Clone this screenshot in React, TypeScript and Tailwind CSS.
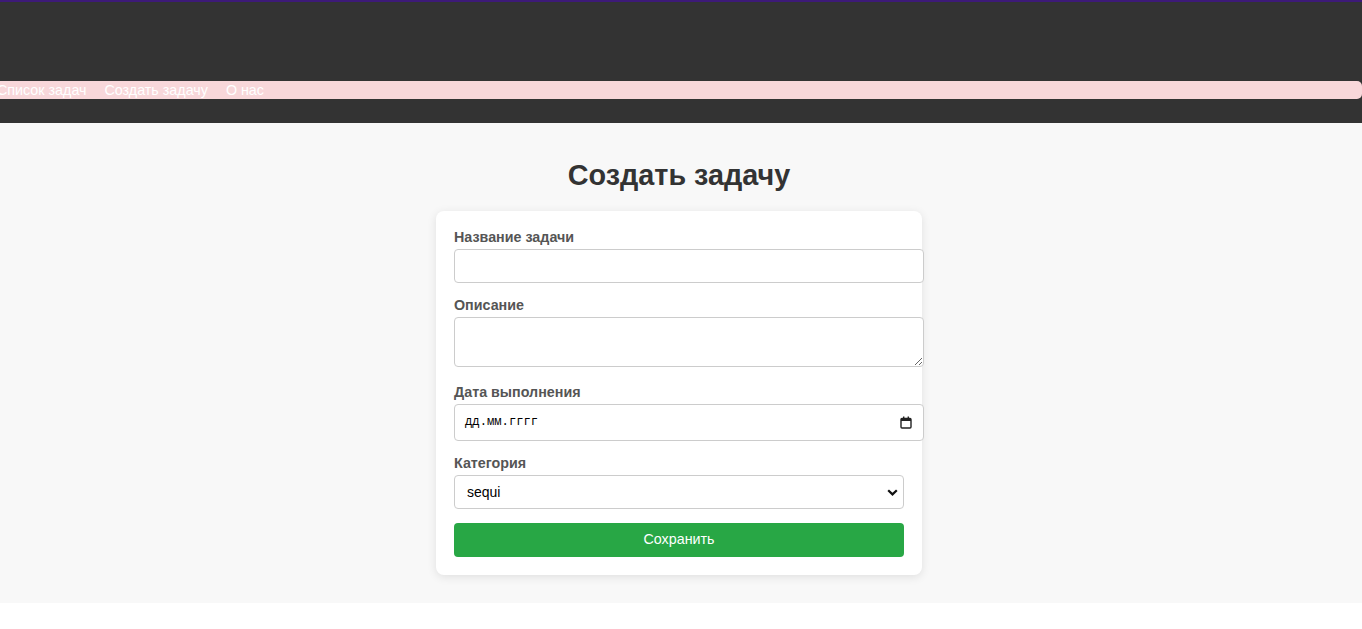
import { useState } from 'react'

export default function App() {
  const [title, setTitle] = useState('')
  const [desc, setDesc] = useState('')
  const [category, setCategory] = useState('sequi')

  return (
    <div className="min-h-screen bg-white font-['Liberation_Sans',Arial,sans-serif]">
      <header className="h-[123px] bg-[#333333] border-t-[2px] border-[#3d1a78] pt-[79px]">
        <nav className="h-[18px] bg-[#f8d7da] rounded-r-[5px] flex items-center gap-[18px] -ml-[3px] text-[14.3px] leading-[18px] text-white">
          <a href="#" className="text-white">Список задач</a>
          <a href="#" className="text-white">Создать задачу</a>
          <a href="#" className="text-white">О нас</a>
        </nav>
      </header>

      <main className="bg-[#f8f8f8] pt-[36px] pb-[28px] pr-[4px]">
        <h1 className="text-center text-[28.8px] leading-[32px] font-bold text-[#333333]">Создать задачу</h1>

        <form
          onSubmit={(e) => e.preventDefault()}
          className="mt-[20px] mx-auto w-[486px] bg-white rounded-[8px] shadow-[0_2px_10px_rgba(0,0,0,0.1)] p-[18px]"
        >
          <label className="block text-[14.3px] leading-[16px] font-bold text-[#555555] mb-[4px]">Название задачи</label>
          <input
            value={title}
            onChange={(e) => setTitle(e.target.value)}
            className="block w-[470px] h-[34px] px-[10px] border border-[#cccccc] rounded-[4px] bg-white text-[14px] outline-none"
          />

          <label className="block mt-[14px] text-[14.3px] leading-[16px] font-bold text-[#555555] mb-[4px]">Описание</label>
          <textarea
            value={desc}
            onChange={(e) => setDesc(e.target.value)}
            className="block w-[470px] h-[50px] px-[10px] py-[8px] border border-[#cccccc] rounded-[4px] bg-white text-[14px] outline-none"
          />

          <label className="block mt-[17px] text-[14.3px] leading-[16px] font-bold text-[#555555] mb-[4px]">Дата выполнения</label>
          <div className="w-[470px] h-[37px] pl-[10px] pr-[11px] border border-[#cccccc] rounded-[4px] bg-white flex items-center justify-between">
            <span className="font-['Liberation_Mono',monospace] text-[12.2px] text-black">дд.мм.гггг</span>
            <svg width="12" height="13" viewBox="0 0 12 13">
              <rect x="1" y="2.5" width="10" height="9.5" rx="1" fill="none" stroke="#222" strokeWidth="1.4" />
              <rect x="1" y="2.5" width="10" height="2.5" fill="#222" />
              <rect x="3" y="0.5" width="1.4" height="2.5" fill="#222" />
              <rect x="7.6" y="0.5" width="1.4" height="2.5" fill="#222" />
            </svg>
          </div>

          <label className="block mt-[14px] text-[14.3px] leading-[16px] font-bold text-[#555555] mb-[4px]">Категория</label>
          <div className="relative w-[450px]">
            <select
              value={category}
              onChange={(e) => setCategory(e.target.value)}
              className="block w-full h-[34px] pl-[12px] pr-[30px] border border-[#cccccc] rounded-[4px] bg-white text-[14px] text-black appearance-none outline-none"
            >
              <option value="sequi">sequi</option>
              <option value="dolor">dolor</option>
            </select>
            <svg width="11" height="7" viewBox="0 0 11 7" className="absolute right-[6px] top-[14px] pointer-events-none">
              <path d="M1.2 1.2 L5.5 5.4 L9.8 1.2" fill="none" stroke="#111" strokeWidth="2.2" />
            </svg>
          </div>

          <button
            type="submit"
            className="mt-[14px] w-[450px] h-[34px] bg-[#28a745] rounded-[4px] text-white text-[14.3px]"
          >
            Сохранить
          </button>
        </form>
      </main>
    </div>
  )
}
